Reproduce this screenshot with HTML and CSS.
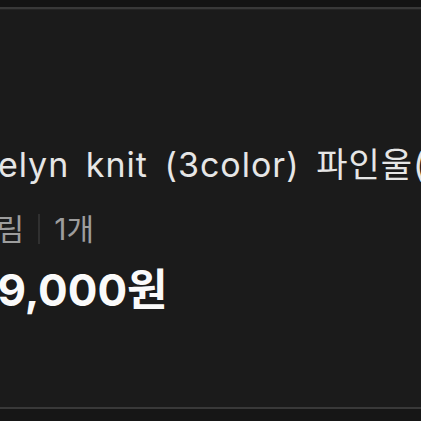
FILE: index.html
```html
<!DOCTYPE html>
<html>
<head>
    <title>상품 정보</title>
    <link rel="stylesheet" href="styles.css">
</head>
<body>
    <div class="top-bar"></div>
    <main class="product">
        <h1 class="product-title">Evelyn knit (3color) 파인울(울 30%) 라운드 니트</h1>
        <div class="product-option">
            <span>크림</span>
            <span class="divider"></span>
            <span>1개</span>
        </div>
        <div class="product-price">39,000원</div>
    </main>
    <div class="bottom-bar"></div>
</body>
</html>
```

FILE: styles.css
```css
html, body {
    margin: 0;
    height: 100%;
}
body {
    background: #1b1b1b;
    font-family: Inter, "Noto Sans CJK KR", sans-serif;
    display: flex;
    flex-direction: column;
    overflow: hidden;
}
.top-bar {
    height: 7px;
    background: #141414;
    border-bottom: 2px solid #393939;
    box-shadow: 0 1px 0 #242424;
}
.product {
    flex: 1;
    padding-top: 136px;
    margin-left: -31px;
    white-space: nowrap;
}
.product-title {
    margin: 0 0 0 -12px;
    font-size: 34px;
    font-weight: 400;
    line-height: 40px;
    letter-spacing: 1px;
    word-spacing: 6px;
    color: #e6e6e6;
}
.product-option {
    margin-top: 26px;
    display: flex;
    align-items: center;
    font-size: 30px;
    line-height: 36px;
    color: #9d9d9d;
}
.divider {
    width: 2px;
    height: 30px;
    margin: 0 14px;
    background: #303030;
}
.product-price {
    margin-top: 15px;
    font-size: 44px;
    font-weight: 700;
    line-height: 56px;
    color: #fafafa;
}
.bottom-bar {
    height: 12px;
    background: #161616;
    border-top: 2px solid #393939;
}
```
